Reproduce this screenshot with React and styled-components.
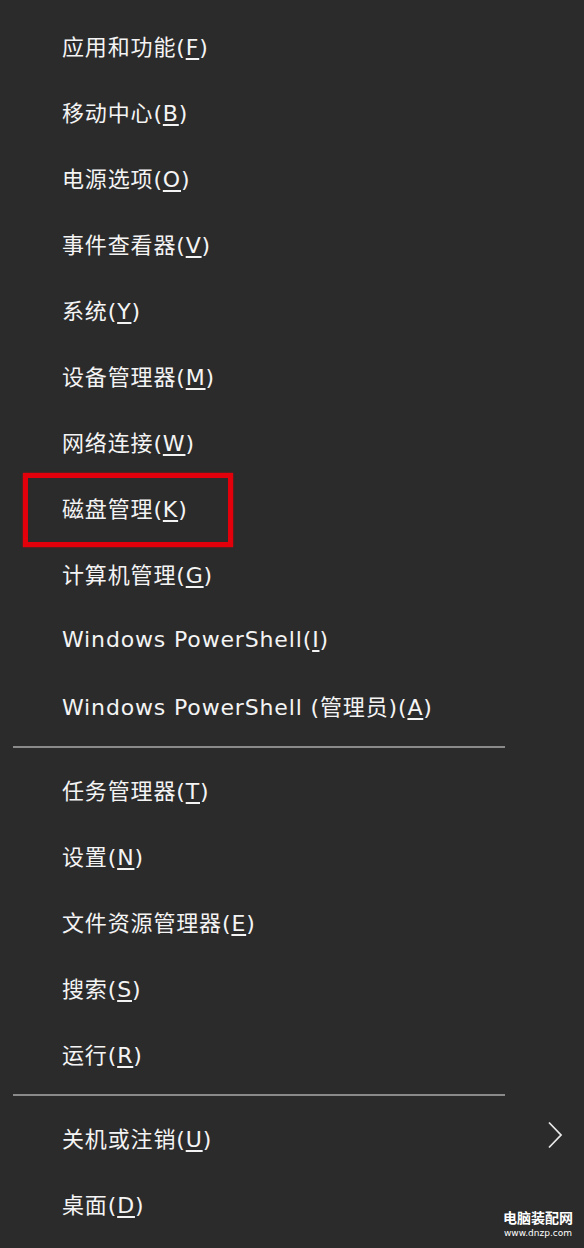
import React from "react";
import styled, { createGlobalStyle } from "styled-components";

const GlobalStyle = createGlobalStyle`
  html, body {
    margin: 0;
    padding: 0;
    background: #2b2b2b;
  }
  body {
    font-family: "DejaVu Sans", "Noto Sans CJK SC", sans-serif;
  }
`;

const groups = [
  [
    { label: "应用和功能", key: "F" },
    { label: "移动中心", key: "B" },
    { label: "电源选项", key: "O" },
    { label: "事件查看器", key: "V" },
    { label: "系统", key: "Y" },
    { label: "设备管理器", key: "M" },
    { label: "网络连接", key: "W" },
    { label: "磁盘管理", key: "K", marked: true },
    { label: "计算机管理", key: "G" },
    { label: "Windows PowerShell", key: "I" },
    { label: "Windows PowerShell (管理员)", key: "A" },
  ],
  [
    { label: "任务管理器", key: "T" },
    { label: "设置", key: "N" },
    { label: "文件资源管理器", key: "E" },
    { label: "搜索", key: "S" },
    { label: "运行", key: "R" },
  ],
  [
    { label: "关机或注销", key: "U", submenu: true },
    { label: "桌面", key: "D" },
  ],
];

const Menu = styled.div`
  position: relative;
  width: 584px;
  height: 1248px;
  box-sizing: border-box;
  padding-top: 12px;
  background: #2b2b2b;
  display: flex;
  flex-direction: column;
  overflow: hidden;
`;

const Item = styled.div`
  position: relative;
  height: 66px;
  flex-shrink: 0;
  display: flex;
  align-items: center;
  padding-left: 62px;
  padding-right: 21px;
  color: #f4f4f4;
  font-size: 22px;
  letter-spacing: 0.85px;
  white-space: nowrap;

  ${({ $marked }) =>
    $marked &&
    `
    &::before {
      content: "";
      position: absolute;
      left: 23px;
      top: -1px;
      width: 210px;
      height: 74px;
      box-sizing: border-box;
      border: 5px solid #e3000b;
      box-shadow: 0 0 2px rgba(227, 0, 11, 0.7);
    }
  `}
`;

const Label = styled.span`
  flex: 1;
`;

const Key = styled.span`
  text-decoration: underline;
  text-underline-offset: 3px;
  text-decoration-thickness: 1.5px;
`;

const Separator = styled.div`
  flex-shrink: 0;
  height: 2px;
  margin: 8px 79px 8px 13px;
  background: #8a8a8a;
`;

const Chevron = styled.svg`
  width: 16px;
  height: 28px;
  margin-top: -4px;
`;

const Watermark = styled.div`
  position: absolute;
  right: 11px;
  bottom: 7px;
  display: flex;
  flex-direction: column;
  align-items: center;
  color: #fff;
`;

const WatermarkTitle = styled.div`
  font-family: "Noto Sans CJK SC", sans-serif;
  font-size: 14px;
  font-weight: 700;
  line-height: 16px;
`;

const WatermarkUrl = styled.div`
  font-family: "DejaVu Sans", sans-serif;
  font-size: 9px;
  line-height: 16px;
`;

const App = () => (
  <>
    <GlobalStyle />
    <Menu>
      {groups.map((group, gi) => (
        <React.Fragment key={gi}>
          {gi > 0 && <Separator />}
          {group.map((item) => (
            <Item key={item.key} $marked={item.marked}>
              <Label>
                {item.label}(<Key>{item.key}</Key>)
              </Label>
              {item.submenu && (
                <Chevron viewBox="0 0 16 28" fill="none">
                  <polyline
                    points="2,1.5 14,14 2,26.5"
                    stroke="#e8e8e8"
                    strokeWidth="1.8"
                  />
                </Chevron>
              )}
            </Item>
          ))}
        </React.Fragment>
      ))}
      <Watermark>
        <WatermarkTitle>电脑装配网</WatermarkTitle>
        <WatermarkUrl>www.dnzp.com</WatermarkUrl>
      </Watermark>
    </Menu>
  </>
);

export default App;
